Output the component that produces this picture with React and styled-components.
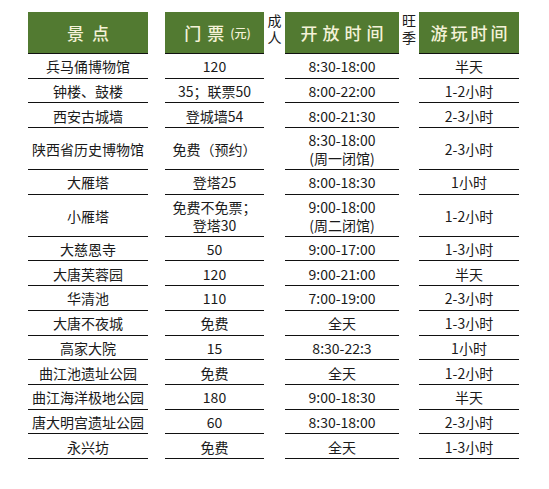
import React from 'react'
import styled, { createGlobalStyle } from 'styled-components'

const GlobalStyle = createGlobalStyle`
  html, body {
    margin: 0;
    padding: 0;
    background: #ffffff;
  }
  body {
    font-family: "Noto Sans CJK SC", "Liberation Sans", sans-serif;
    color: #1a1a1a;
  }
`

const GREEN = '#527a31'
const COLS = [120, 17, 99, 21, 114, 20, 100]

const Sheet = styled.div`
  display: flex;
  flex-direction: column;
  padding: 12px 0 0 28px;
  width: 549px;
  height: 489px;
  box-sizing: border-box;
`

const Row = styled.div`
  display: flex;
  height: ${props => props.$h}px;
`

const HeadCell = styled.div`
  display: flex;
  justify-content: center;
  align-items: center;
  width: ${props => props.$w}px;
  background: ${GREEN};
  border-bottom: 1px solid #111;
  box-sizing: border-box;
  color: #f4f2d8;
  font-size: 17px;
  font-weight: 500;
  letter-spacing: ${props => props.$ls || 5}px;
  padding-left: ${props => props.$ls || 5}px;
`

const Small = styled.span`
  font-size: 12px;
  letter-spacing: 0;
`

const SideNote = styled.div`
  display: flex;
  align-items: center;
  justify-content: center;
  width: ${props => props.$w}px;
  padding-bottom: 4px;
  box-sizing: border-box;
  font-size: 14px;
  line-height: 14px;
  letter-spacing: 3px;
  writing-mode: vertical-rl;
`

const Gap = styled.div`
  width: ${props => props.$w}px;
`

const Cell = styled.div`
  display: flex;
  flex-direction: column;
  justify-content: center;
  align-items: center;
  width: ${props => props.$w}px;
  border-bottom: 1px solid #111;
  box-sizing: border-box;
  font-size: 14px;
  line-height: 18px;
  text-align: center;
  padding-top: 1px;
`

const rows = [
  ['兵马俑博物馆', '120', '8:30-18:00', '半天'],
  ['钟楼、鼓楼', '35；联票50', '8:00-22:00', '1-2小时'],
  ['西安古城墙', '登城墙54', '8:00-21:30', '2-3小时'],
  ['陕西省历史博物馆', '免费（预约）', ['8:30-18:00', '(周一闭馆)'], '2-3小时', true],
  ['大雁塔', '登塔25', '8:00-18:30', '1小时'],
  ['小雁塔', ['免费不免票；', '登塔30'], ['9:00-18:00', '(周二闭馆)'], '1-2小时', true],
  ['大慈恩寺', '50', '9:00-17:00', '1-3小时'],
  ['大唐芙蓉园', '120', '9:00-21:00', '半天'],
  ['华清池', '110', '7:00-19:00', '2-3小时'],
  ['大唐不夜城', '免费', '全天', '1-3小时'],
  ['高家大院', '15', '8:30-22:3', '1小时'],
  ['曲江池遗址公园', '免费', '全天', '1-2小时'],
  ['曲江海洋极地公园', '180', '9:00-18:30', '半天'],
  ['唐大明宫遗址公园', '60', '8:30-18:00', '2-3小时'],
  ['永兴坊', '免费', '全天', '1-3小时'],
]

const Lines = ({ value }) =>
  Array.isArray(value) ? (
    <span>
      {value[0]}
      <br />
      {value[1]}
    </span>
  ) : (
    value
  )

const App = () => {
  return (
    <>
      <GlobalStyle />
      <Sheet>
        <Row $h={42}>
          <HeadCell $w={COLS[0]} $ls={8}>景点</HeadCell>
          <Gap $w={COLS[1]} />
          <HeadCell $w={COLS[2]} $ls={6}>
            门票<Small>(元)</Small>
          </HeadCell>
          <SideNote $w={COLS[3]}>成人</SideNote>
          <HeadCell $w={COLS[4]}>开放时间</HeadCell>
          <SideNote $w={COLS[5]}>旺季</SideNote>
          <HeadCell $w={COLS[6]} $ls={3}>游玩时间</HeadCell>
        </Row>
        {rows.map(([name, price, hours, span, tall], index) => (
          <Row key={index} $h={tall ? 42 : 24.7}>
            <Cell $w={COLS[0]}>{name}</Cell>
            <Gap $w={COLS[1]} />
            <Cell $w={COLS[2]}>
              <Lines value={price} />
            </Cell>
            <Gap $w={COLS[3]} />
            <Cell $w={COLS[4]}>
              <Lines value={hours} />
            </Cell>
            <Gap $w={COLS[5]} />
            <Cell $w={COLS[6]}>{span}</Cell>
          </Row>
        ))}
      </Sheet>
    </>
  )
}

export default App
